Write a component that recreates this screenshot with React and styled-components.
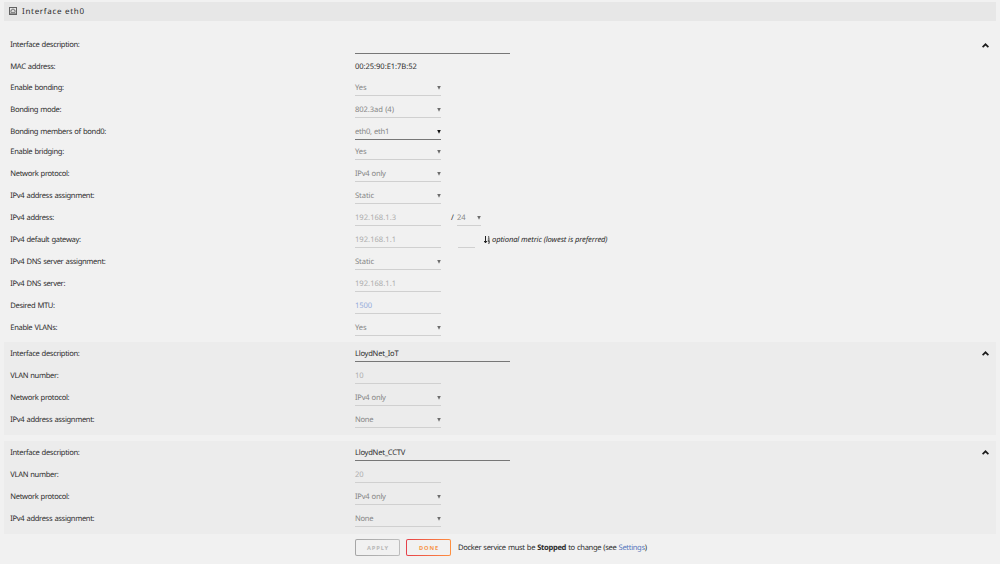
import React from "react";
import styled, { createGlobalStyle } from "styled-components";

const Global = createGlobalStyle`
  * { box-sizing: border-box; }
  body {
    margin: 0;
    background: #f1f1f1;
    color: #2c2c2c;
    font-family: "Noto Sans", sans-serif;
    font-size: 7.6px;
    line-height: 10px;
    text-rendering: geometricPrecision;
  }
`;

const Page = styled.main`
  height: 564px;
  padding: 2px 4px 0;
  overflow: hidden;
`;

const TitleBar = styled.header`
  display: flex;
  align-items: center;
  gap: 5px;
  height: 19px;
  padding: 0 0 0 5px;
  background: #e7e7e7;
  font-size: 8px;
  letter-spacing: 0.7px;
  svg { margin-bottom: 1px; }
`;

const Panel = styled.section`
  display: flex;
  justify-content: space-between;
  height: ${(p) => p.$height}px;
  margin-bottom: ${(p) => p.$gap || 0}px;
  padding: ${(p) => p.$top || 0}px 7px 0 6px;
  background: ${(p) => (p.$shaded ? "#ececec" : "transparent")};
`;

const Rows = styled.div`
  display: flex;
  flex-direction: column;
`;

const Row = styled.div`
  display: flex;
  align-items: flex-end;
  height: ${(p) => p.$height || 22}px;
`;

const Label = styled.label`
  width: 345px;
  padding: 0 0 ${(p) => p.$pad || 3}px 0.3px;
  white-space: nowrap;
  letter-spacing: -0.35px;
  word-spacing: 0.6px;
`;

const tones = { dark: "#2c2c2c", select: "#858585", input: "#acacac", blue: "#93abdb" };

const Field = styled.div`
  display: flex;
  justify-content: space-between;
  width: ${(p) => p.$width || 86}px;
  height: 13px;
  border-bottom: 1px solid ${(p) => (p.$active ? "#777" : "#d0d0d0")};
  color: ${(p) => tones[p.$tone || "select"]};
  letter-spacing: ${(p) => p.$track ?? -0.08}px;
  word-spacing: 0.5px;
  white-space: nowrap;
`;

const Caret = styled.span`
  width: 4px;
  height: 4px;
  margin-top: 3px;
  background: ${(p) => (p.$active ? "#111" : "#6c6c6c")};
  clip-path: polygon(5% 0, 95% 0, 50% 95%);
`;

const Plain = styled.span`
  padding-bottom: 2px;
  letter-spacing: -0.06px;
`;

const Slash = styled.span`
  width: 6px;
  margin-left: 10px;
  padding-bottom: 3px;
`;

const Metric = styled.div`
  display: flex;
  align-items: flex-end;
  margin-left: 17px;
`;

const Hint = styled.em`
  display: flex;
  align-items: center;
  gap: 2px;
  margin-left: 9px;
  padding-bottom: 3px;
  white-space: nowrap;
  letter-spacing: -0.11px;
`;

const Toggle = styled.div`
  padding-top: ${(p) => p.$top}px;
  height: 20px;
  svg { display: block; }
`;

const Footer = styled.footer`
  display: flex;
  align-items: center;
  height: 17px;
  margin-top: 5px;
  padding-left: 351px;
`;

const Button = styled.button`
  width: 45px;
  height: 17px;
  margin-right: ${(p) => p.$after}px;
  padding: 1px 0 0 1px;
  border: 1px solid transparent;
  border-radius: 2px;
  background:
    linear-gradient(#f1f1f1, #f1f1f1) padding-box,
    ${(p) => (p.$primary ? "linear-gradient(90deg, #e5404b, #ff9040)" : "linear-gradient(90deg, #a6a6a6, #bdbdbd)")} border-box;
  color: ${(p) => (p.$primary ? "#f79448" : "#b8b8b8")};
  font: bold 5.7px/14px "Noto Sans", sans-serif;
  letter-spacing: 0.9px;
`;

const Link = styled.a`
  color: #5577bd;
`;

const Note = styled.span`
  white-space: nowrap;
  letter-spacing: -0.34px;
  word-spacing: 0.5px;
`;

const Port = () => (
  <svg width="8" height="8" viewBox="0 0 8 8" fill="none" stroke="#626262">
    <rect x=".5" y=".5" width="7" height="7" />
    <path d="M1.9 5.4V3.3h1V2.2h2.2v1.1h1v2.1z" strokeWidth=".8" />
    <path d="M1 6.5h6" strokeWidth=".6" />
  </svg>
);

const Chevron = () => (
  <svg width="7" height="5" viewBox="0 0 7 5">
    <path d="M.6 4.1 3.5 1.3 6.4 4.1" fill="none" stroke="#1c1c1c" strokeWidth="1.7" />
  </svg>
);

const SortIcon = () => (
  <svg width="6" height="8" viewBox="0 0 6 8" fill="none" stroke="#222">
    <path d="M1.5 0v6.8M.2 5l1.3 1.9L2.8 5" strokeWidth="1" />
    <path d="M4 .9l.8-.4v2.7M3.8 3.2h1.9M5.3 5.7H4.1V4.5h1.2v2.8H4" strokeWidth=".7" />
  </svg>
);

const Select = ({ children, active, width, track }) => (
  <Field $active={active} $width={width} $track={track}>
    {children}
    <Caret $active={active} />
  </Field>
);

const LabelledRow = ({ label, pad, height, children }) => (
  <Row $height={height}>
    <Label $pad={pad}>{label}</Label>
    {children}
  </Row>
);

const Description = ({ height, value, pad }) => (
  <LabelledRow label="Interface description:" height={height} pad={pad}>
    <Field $width={155} $active $tone="dark" $track={-0.26}>{value}</Field>
  </LabelledRow>
);

const Vlan = ({ name, number, gap, top }) => (
  <Panel $shaded $height={93} $gap={gap}>
    <Rows>
      <Description height={top} value={name} />
      <LabelledRow label="VLAN number:"><Field $tone="input">{number}</Field></LabelledRow>
      <LabelledRow label="Network protocol:"><Select track={-0.25}>IPv4 only</Select></LabelledRow>
      <LabelledRow label="IPv4 address assignment:"><Select track={-0.3}>None</Select></LabelledRow>
    </Rows>
    <Toggle $top={9}><Chevron /></Toggle>
  </Panel>
);

export default function App() {
  return (
    <Page>
      <Global />
      <TitleBar><Port />Interface eth0</TitleBar>
      <Panel $height={321} $top={11}>
        <Rows>
          <Description height={22} pad={4} />
          <LabelledRow label="MAC address:" height={20} pad={2}><Plain>00:25:90:E1:7B:52</Plain></LabelledRow>
          <LabelledRow label="Enable bonding:"><Select>Yes</Select></LabelledRow>
          <LabelledRow label="Bonding mode:"><Select>802.3ad (4)</Select></LabelledRow>
          <LabelledRow label="Bonding members of bond0:"><Select active track={-0.25}>eth0, eth1</Select></LabelledRow>
          <LabelledRow label="Enable bridging:" height={20}><Select>Yes</Select></LabelledRow>
          <LabelledRow label="Network protocol:"><Select track={-0.25}>IPv4 only</Select></LabelledRow>
          <LabelledRow label="IPv4 address assignment:"><Select>Static</Select></LabelledRow>
          <LabelledRow label="IPv4 address:">
            <Field $tone="input" $track={0.02}>192.168.1.3</Field>
            <Slash>/</Slash>
            <Select width={24}>24</Select>
          </LabelledRow>
          <LabelledRow label="IPv4 default gateway:">
            <Field $tone="input" $track={0.02}>192.168.1.1</Field>
            <Metric>
              <Field $width={17} />
              <Hint><SortIcon />optional metric (lowest is preferred)</Hint>
            </Metric>
          </LabelledRow>
          <LabelledRow label="IPv4 DNS server assignment:"><Select>Static</Select></LabelledRow>
          <LabelledRow label="IPv4 DNS server:"><Field $tone="input" $track={0.02}>192.168.1.1</Field></LabelledRow>
          <LabelledRow label="Desired MTU:"><Field $tone="blue">1500</Field></LabelledRow>
          <LabelledRow label="Enable VLANs:"><Select>Yes</Select></LabelledRow>
        </Rows>
        <Toggle $top={11}><Chevron /></Toggle>
      </Panel>
      <Vlan name="LloydNet_IoT" number="10" gap={6} top={20} />
      <Vlan name="LloydNet_CCTV" number="20" top={20} />
      <Footer>
        <Button $after={6}>APPLY</Button>
        <Button $primary $after={7}>DONE</Button>
        <Note>Docker service must be <b>Stopped</b> to change (see <Link>Settings</Link>)</Note>
      </Footer>
    </Page>
  );
}
